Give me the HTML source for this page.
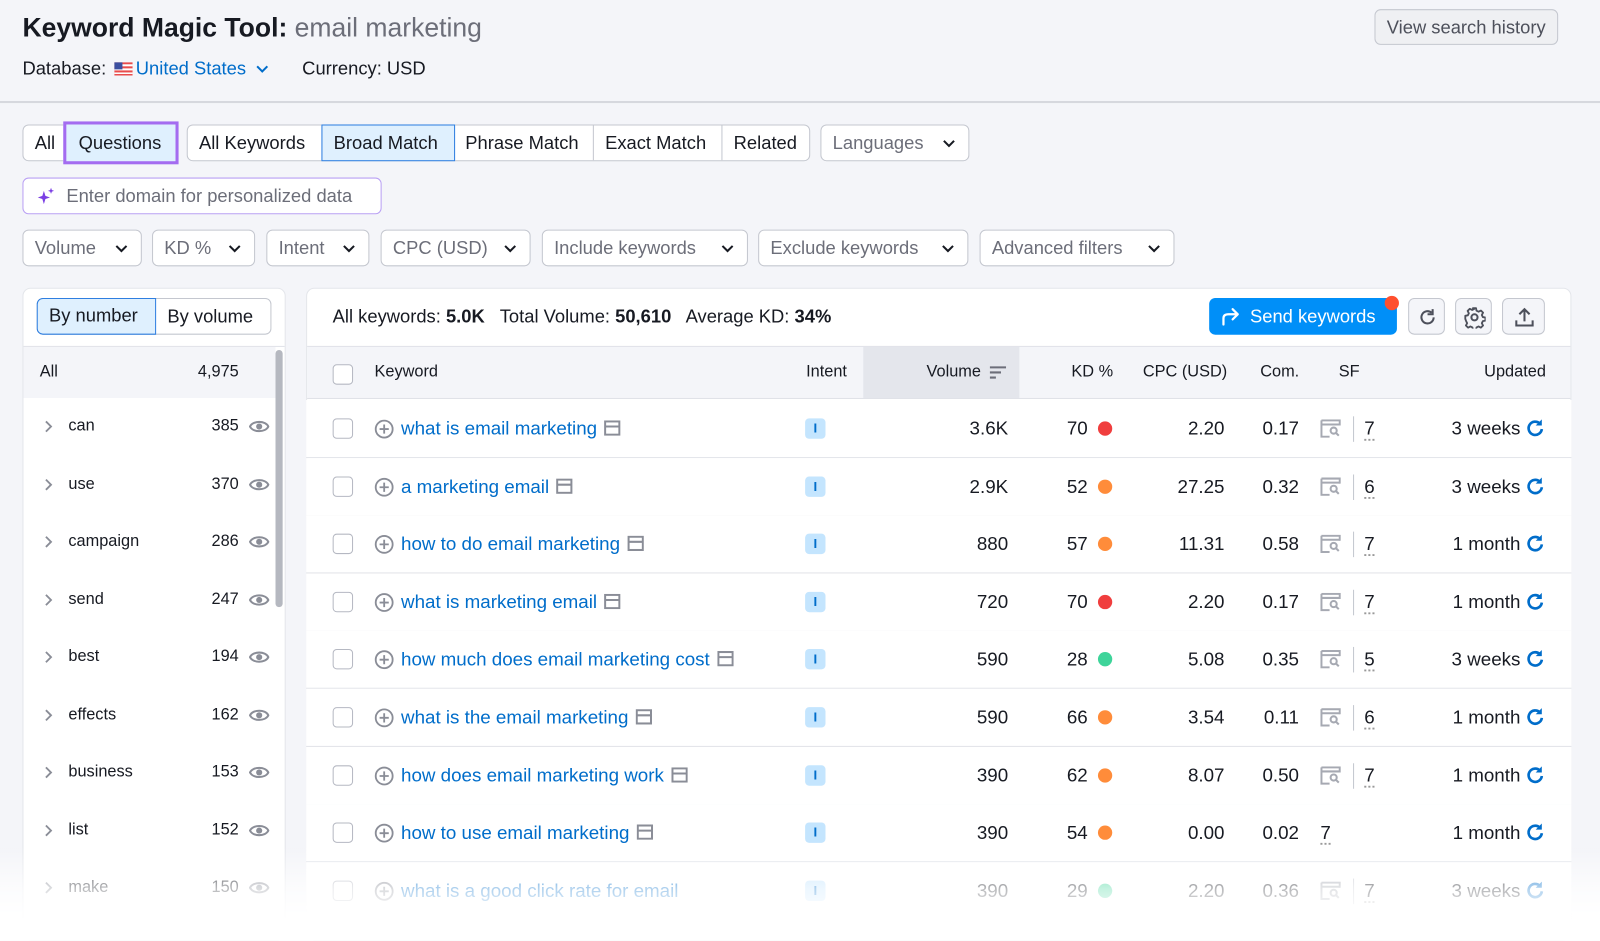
<!DOCTYPE html>
<html><head><meta charset="utf-8"><style>
*{box-sizing:border-box;margin:0;padding:0}
body{width:1600px;height:922px;overflow:hidden;background:#f4f5f9;font-family:"Liberation Sans",sans-serif;color:#171a22;position:relative}
#w{position:absolute;left:0;top:0;width:1600px;height:922px;transform:scale(1.0204);transform-origin:0 0}
.a{position:absolute;white-space:nowrap}
.btn{position:absolute;height:36px;border:1px solid #c4c7cf;border-radius:6px;background:#fff;font-size:18px;line-height:34px;padding:0 11px;color:#171a22}
.dd{color:#6c6e79}
.dd svg{position:absolute;right:12px;top:13px}
.seg{position:absolute;top:0;height:34px;line-height:34px;padding:0 11px;border-left:1px solid #c4c7cf}
.lrow{position:absolute;left:22px;width:248px;height:56px;font-size:16px;line-height:56px}
.lrow .w{position:absolute;left:45px}
.lrow .n{position:absolute;right:36px}
.lrow .c{position:absolute;left:21px;top:21px}
.lrow .e{position:absolute;right:6px;top:19px}
.row{position:absolute;left:300px;width:1240px;height:57px;background:#fff;border-bottom:1px solid #e0e2e8;font-size:18.4px;line-height:56px}
.row>*{position:absolute}
.cb{left:26px;top:18px;width:20px;height:20px;border:1.5px solid #b5b8c2;border-radius:4px;background:#fff}
.pl{left:67px;top:19px}
.kw{left:93px;color:#006dca}
.kw svg{margin-left:7px;vertical-align:-1px}
.it{left:489px;top:18px;width:20px;height:20px;background:#c4e5fe;border-radius:4px;color:#006dca;font-size:13px;line-height:20px;text-align:center;font-weight:bold}
.vol{right:552px}
.kd{right:474px}
.dot{left:776px;top:21px;width:14px;height:14px;border-radius:50%}
.cpc{right:340px}
.com{right:267px}
.sfi{left:994px;top:19px}
.sfd{left:1026px;top:16px;width:1px;height:25px;background:#c4c7cf}
.sfn{left:1037px;text-decoration:underline dotted #999;text-underline-offset:5px}
.up{right:50px}
.ri{left:1195px;top:18px}
.red{background:#f03e3e}.or{background:#ff8c3a}.gr{background:#3ed49a}
</style></head><body><div id="w">
<div class="a" style="left:22px;top:10px;font-size:26px;font-weight:bold;line-height:34px">Keyword Magic Tool: <span style="font-weight:normal;color:#6c6e79">email marketing</span></div>
<div class="a" style="left:22px;top:56px;font-size:18px;line-height:22px">Database: <svg width="18" height="13" style="vertical-align:-1px;margin:0 3px"><rect width="18" height="13" fill="#e84c4c"/><rect y="2" width="18" height="2" fill="#fff"/><rect y="6" width="18" height="2" fill="#fff"/><rect y="10" width="18" height="1.5" fill="#fff"/><rect width="8" height="7" fill="#3b4fa0"/></svg><span style="color:#006dca">United States</span> <svg width="14" height="10" style="margin-left:4px"><path d="M2 2l5 5 5-5" stroke="#006dca" stroke-width="2" fill="none"/></svg><span style="margin-left:32px">Currency: USD</span></div>
<div class="btn" style="left:1347px;top:9px;height:35px;background:#eff0f3;color:#4d505b;font-size:18px">View search history</div>
<div class="a" style="left:0;top:99px;width:1600px;height:2px;background:#d6d8de"></div>

<div class="btn" style="left:22px;top:122px;width:151px;padding:0">
 <span class="seg" style="left:0;border:0">All</span>
</div>
<div class="a" style="left:62px;top:119px;width:113px;height:42px;border:3px solid #a46cf0;background:#dff0fe;font-size:18px;line-height:36px;padding-left:12px">Questions</div>
<div class="btn" style="left:183px;top:122px;width:611px;padding:0">
 <span class="seg" style="left:0;border:0">All Keywords</span>
 <span class="seg" style="left:131px;top:-1px;height:36px;border:1.5px solid #2e7ee0;background:#dff0fe;width:131px">Broad Match</span>
 <span class="seg" style="left:261px;border-left:0">Phrase Match</span>
 <span class="seg" style="left:397px">Exact Match</span>
 <span class="seg" style="left:523px">Related</span>
</div>
<div class="btn dd" style="left:804px;top:122px;width:146px">Languages<svg width="14" height="10"><path d="M2 2l5 5 5-5" stroke="#171a22" stroke-width="2" fill="none"/></svg></div>
<div class="btn" style="left:22px;top:174px;width:352px;border-color:#b9a0f4;color:#6c6e79;padding-left:42px"><svg class="a" style="left:12px;top:8px" width="20" height="20" viewBox="0 0 20 20"><path d="M8 4 L9.5 9 L14 10.5 L9.5 12 L8 17 L6.5 12 L2 10.5 L6.5 9Z" fill="#7b3fe4"/><path d="M15 1 L15.8 3.2 L18 4 L15.8 4.8 L15 7 L14.2 4.8 L12 4 L14.2 3.2Z" fill="#7b3fe4"/></svg>Enter domain for personalized data</div>

<div class="btn dd" style="left:22px;top:225px;width:117px">Volume<svg width="14" height="10"><path d="M2 2l5 5 5-5" stroke="#171a22" stroke-width="2" fill="none"/></svg></div>
<div class="btn dd" style="left:149px;top:225px;width:101px">KD %<svg width="14" height="10"><path d="M2 2l5 5 5-5" stroke="#171a22" stroke-width="2" fill="none"/></svg></div>
<div class="btn dd" style="left:261px;top:225px;width:101px">Intent<svg width="14" height="10"><path d="M2 2l5 5 5-5" stroke="#171a22" stroke-width="2" fill="none"/></svg></div>
<div class="btn dd" style="left:373px;top:225px;width:147px">CPC (USD)<svg width="14" height="10"><path d="M2 2l5 5 5-5" stroke="#171a22" stroke-width="2" fill="none"/></svg></div>
<div class="btn dd" style="left:531px;top:225px;width:202px">Include keywords<svg width="14" height="10"><path d="M2 2l5 5 5-5" stroke="#171a22" stroke-width="2" fill="none"/></svg></div>
<div class="btn dd" style="left:743px;top:225px;width:206px">Exclude keywords<svg width="14" height="10"><path d="M2 2l5 5 5-5" stroke="#171a22" stroke-width="2" fill="none"/></svg></div>
<div class="btn dd" style="left:960px;top:225px;width:191px">Advanced filters<svg width="14" height="10"><path d="M2 2l5 5 5-5" stroke="#171a22" stroke-width="2" fill="none"/></svg></div>

<div class="a" style="left:22px;top:282px;width:258px;height:640px;background:#fff;border:1px solid #e4e6eb;border-radius:8px"></div>
<div class="a" style="left:36px;top:292px;width:230px;height:36px;border:1px solid #c4c7cf;border-radius:6px;background:#fff;font-size:18px;line-height:34px">
 <span class="a" style="left:-1px;top:-1px;width:117px;height:36px;border:1.5px solid #2e7ee0;border-radius:6px 0 0 6px;background:#dff0fe;padding-left:11px;line-height:33px">By number</span>
 <span class="a" style="left:127px">By volume</span>
</div>
<div class="a" style="left:23px;top:339px;width:256px;height:1px;background:#e0e2e8"></div>
<div class="lrow" style="top:340px;height:50px;background:#f4f5f9;line-height:50px;width:247px;left:23px"><span class="a" style="left:16px">All</span><span class="n" style="right:36px">4,975</span></div>
<div class="a" style="left:270px;top:343px;width:7px;height:252px;background:#b5b8c0;border-radius:4px"></div>

<div class="lrow" style="top:390px"><svg class="c" width="10" height="14"><path d="M2 2l5 5-5 5" stroke="#8a8d97" stroke-width="1.8" fill="none"/></svg><span class="w">can</span><span class="n">385</span><svg class="e" width="20" height="18" viewBox="0 0 20 18"><path d="M1 9C4 3 16 3 19 9C16 15 4 15 1 9Z" stroke="#8a8d97" stroke-width="2" fill="none"/><circle cx="10" cy="9" r="3" fill="#8a8d97"/></svg></div>
<div class="lrow" style="top:447px"><svg class="c" width="10" height="14"><path d="M2 2l5 5-5 5" stroke="#8a8d97" stroke-width="1.8" fill="none"/></svg><span class="w">use</span><span class="n">370</span><svg class="e" width="20" height="18" viewBox="0 0 20 18"><path d="M1 9C4 3 16 3 19 9C16 15 4 15 1 9Z" stroke="#8a8d97" stroke-width="2" fill="none"/><circle cx="10" cy="9" r="3" fill="#8a8d97"/></svg></div>
<div class="lrow" style="top:503px"><svg class="c" width="10" height="14"><path d="M2 2l5 5-5 5" stroke="#8a8d97" stroke-width="1.8" fill="none"/></svg><span class="w">campaign</span><span class="n">286</span><svg class="e" width="20" height="18" viewBox="0 0 20 18"><path d="M1 9C4 3 16 3 19 9C16 15 4 15 1 9Z" stroke="#8a8d97" stroke-width="2" fill="none"/><circle cx="10" cy="9" r="3" fill="#8a8d97"/></svg></div>
<div class="lrow" style="top:560px"><svg class="c" width="10" height="14"><path d="M2 2l5 5-5 5" stroke="#8a8d97" stroke-width="1.8" fill="none"/></svg><span class="w">send</span><span class="n">247</span><svg class="e" width="20" height="18" viewBox="0 0 20 18"><path d="M1 9C4 3 16 3 19 9C16 15 4 15 1 9Z" stroke="#8a8d97" stroke-width="2" fill="none"/><circle cx="10" cy="9" r="3" fill="#8a8d97"/></svg></div>
<div class="lrow" style="top:616px"><svg class="c" width="10" height="14"><path d="M2 2l5 5-5 5" stroke="#8a8d97" stroke-width="1.8" fill="none"/></svg><span class="w">best</span><span class="n">194</span><svg class="e" width="20" height="18" viewBox="0 0 20 18"><path d="M1 9C4 3 16 3 19 9C16 15 4 15 1 9Z" stroke="#8a8d97" stroke-width="2" fill="none"/><circle cx="10" cy="9" r="3" fill="#8a8d97"/></svg></div>
<div class="lrow" style="top:673px"><svg class="c" width="10" height="14"><path d="M2 2l5 5-5 5" stroke="#8a8d97" stroke-width="1.8" fill="none"/></svg><span class="w">effects</span><span class="n">162</span><svg class="e" width="20" height="18" viewBox="0 0 20 18"><path d="M1 9C4 3 16 3 19 9C16 15 4 15 1 9Z" stroke="#8a8d97" stroke-width="2" fill="none"/><circle cx="10" cy="9" r="3" fill="#8a8d97"/></svg></div>
<div class="lrow" style="top:729px"><svg class="c" width="10" height="14"><path d="M2 2l5 5-5 5" stroke="#8a8d97" stroke-width="1.8" fill="none"/></svg><span class="w">business</span><span class="n">153</span><svg class="e" width="20" height="18" viewBox="0 0 20 18"><path d="M1 9C4 3 16 3 19 9C16 15 4 15 1 9Z" stroke="#8a8d97" stroke-width="2" fill="none"/><circle cx="10" cy="9" r="3" fill="#8a8d97"/></svg></div>
<div class="lrow" style="top:786px"><svg class="c" width="10" height="14"><path d="M2 2l5 5-5 5" stroke="#8a8d97" stroke-width="1.8" fill="none"/></svg><span class="w">list</span><span class="n">152</span><svg class="e" width="20" height="18" viewBox="0 0 20 18"><path d="M1 9C4 3 16 3 19 9C16 15 4 15 1 9Z" stroke="#8a8d97" stroke-width="2" fill="none"/><circle cx="10" cy="9" r="3" fill="#8a8d97"/></svg></div>
<div class="lrow" style="top:842px"><svg class="c" width="10" height="14"><path d="M2 2l5 5-5 5" stroke="#8a8d97" stroke-width="1.8" fill="none"/></svg><span class="w">make</span><span class="n">150</span><svg class="e" width="20" height="18" viewBox="0 0 20 18"><path d="M1 9C4 3 16 3 19 9C16 15 4 15 1 9Z" stroke="#8a8d97" stroke-width="2" fill="none"/><circle cx="10" cy="9" r="3" fill="#8a8d97"/></svg></div>

<div class="a" style="left:300px;top:282px;width:1240px;height:640px;background:#fff;border:1px solid #e4e6eb;border-radius:8px"></div>
<div class="a" style="left:326px;top:298px;font-size:18px;line-height:24px">All keywords: <b>5.0K</b>&nbsp;&nbsp; Total Volume: <b>50,610</b>&nbsp;&nbsp; Average KD: <b>34%</b></div>
<div class="a" style="left:1185px;top:292px;width:184px;height:36px;background:#008ff8;border-radius:6px;color:#fff;font-size:18px;line-height:36px;padding-left:40px">Send keywords<svg class="a" style="left:11px;top:8px" width="20" height="20" viewBox="0 0 20 20"><path d="M3 18V12Q3 8 8 8H17M12 3l5 5-5 5" stroke="#fff" stroke-width="2.2" fill="none" stroke-linecap="round" stroke-linejoin="round"/></svg></div>
<div class="a" style="left:1357px;top:290px;width:14px;height:14px;border-radius:50%;background:#ff4f2e"></div>
<div class="a" style="left:1380px;top:292px;width:36px;height:36px;border:1px solid #c4c7cf;border-radius:6px;background:#f4f5f9"><svg class="a" style="left:8px;top:8px" width="20" height="20" viewBox="0 0 20 20"><path d="M16 10A6 6 0 1 1 14 5.5" stroke="#4d505b" stroke-width="2" fill="none"/><path d="M15 2v5h-5" stroke="#4d505b" stroke-width="2" fill="none"/></svg></div>
<div class="a" style="left:1426px;top:292px;width:36px;height:36px;border:1px solid #c4c7cf;border-radius:6px;background:#f4f5f9"><svg class="a" style="left:7px;top:7px" width="22" height="22" viewBox="0 0 22 22"><circle cx="11" cy="11" r="3" stroke="#4d505b" stroke-width="2" fill="none"/><path d="M9.5 2h3l.5 2.5 2 1 2.3-1.2 2.1 2.1-1.2 2.3 1 2 2.5.5v3l-2.5.5-1 2 1.2 2.3-2.1 2.1-2.3-1.2-2 1-.5 2.5h-3l-.5-2.5-2-1-2.3 1.2-2.1-2.1 1.2-2.3-1-2L2 12.5v-3l2.5-.5 1-2-1.2-2.3 2.1-2.1 2.3 1.2 2-1z" stroke="#4d505b" stroke-width="1.8" fill="none" stroke-linejoin="round"/></svg></div>
<div class="a" style="left:1472px;top:292px;width:42px;height:36px;border:1px solid #c4c7cf;border-radius:6px;background:#f4f5f9"><svg class="a" style="left:10px;top:7px" width="22" height="22" viewBox="0 0 22 22"><path d="M11 15V3M6 8l5-5 5 5M3 14v5h16v-5" stroke="#4d505b" stroke-width="2" fill="none"/></svg></div>

<div class="a" style="left:301px;top:339px;width:1238px;height:52px;background:#f4f5f9;border-top:1px solid #e0e2e8;border-bottom:1px solid #e0e2e8;font-size:16px;line-height:50px">
 <span class="a" style="left:25px;top:17px;width:20px;height:20px;border:1.5px solid #b5b8c2;border-radius:4px;background:#fff"></span>
 <span class="a" style="left:66px">Keyword</span>
 <span class="a" style="left:489px">Intent</span>
 <span class="a" style="left:545px;width:153px;height:50px;background:#e4e6ec"></span>
 <span class="a" style="left:607px">Volume</span>
 <svg class="a" style="left:669px;top:18px" width="16" height="14"><path d="M0 2h16M0 7h11M0 12h6" stroke="#6c6e79" stroke-width="2"/></svg>
 <span class="a" style="left:749px">KD %</span>
 <span class="a" style="left:819px">CPC (USD)</span>
 <span class="a" style="left:934px">Com.</span>
 <span class="a" style="left:1011px">SF</span>
 <span class="a" style="right:24px">Updated</span>
</div>

<div class="row" style="top:392px"><span class="cb"></span><svg class="pl" width="19" height="19" viewBox="0 0 19 19"><circle cx="9.5" cy="9.5" r="8.3" stroke="#8a8d97" stroke-width="1.8" fill="none"/><path d="M9.5 5v9M5 9.5h9" stroke="#8a8d97" stroke-width="1.8"/></svg><span class="kw">what is email marketing<svg width="16" height="15"><rect x="1" y="1" width="14" height="13" stroke="#8a8d97" stroke-width="2" fill="none"/><path d="M1 6h14" stroke="#8a8d97" stroke-width="2"/></svg></span><span class="it">I</span><span class="vol">3.6K</span><span class="kd">70</span><span class="dot red"></span><span class="cpc">2.20</span><span class="com">0.17</span><svg class="sfi" width="20" height="18" viewBox="0 0 20 18"><path d="M1 1h18v5M1 1v16h8" stroke="#a6a9b2" stroke-width="2" fill="none"/><path d="M1 5h18" stroke="#a6a9b2" stroke-width="2"/><circle cx="13" cy="11" r="3" stroke="#a6a9b2" stroke-width="2" fill="none"/><path d="M15 13l3 3" stroke="#a6a9b2" stroke-width="2"/></svg><span class="sfd"></span><span class="sfn">7</span><span class="up">3 weeks</span><svg class="ri" width="20" height="20" viewBox="0 0 20 20"><path d="M16 10.5A6.5 6.5 0 1 1 14 5" stroke="#006dca" stroke-width="2.6" fill="none"/><path d="M16 1v6h-6" fill="#006dca"/></svg></div>
<div class="row" style="top:449px"><span class="cb"></span><svg class="pl" width="19" height="19" viewBox="0 0 19 19"><circle cx="9.5" cy="9.5" r="8.3" stroke="#8a8d97" stroke-width="1.8" fill="none"/><path d="M9.5 5v9M5 9.5h9" stroke="#8a8d97" stroke-width="1.8"/></svg><span class="kw">a marketing email<svg width="16" height="15"><rect x="1" y="1" width="14" height="13" stroke="#8a8d97" stroke-width="2" fill="none"/><path d="M1 6h14" stroke="#8a8d97" stroke-width="2"/></svg></span><span class="it">I</span><span class="vol">2.9K</span><span class="kd">52</span><span class="dot or"></span><span class="cpc">27.25</span><span class="com">0.32</span><svg class="sfi" width="20" height="18" viewBox="0 0 20 18"><path d="M1 1h18v5M1 1v16h8" stroke="#a6a9b2" stroke-width="2" fill="none"/><path d="M1 5h18" stroke="#a6a9b2" stroke-width="2"/><circle cx="13" cy="11" r="3" stroke="#a6a9b2" stroke-width="2" fill="none"/><path d="M15 13l3 3" stroke="#a6a9b2" stroke-width="2"/></svg><span class="sfd"></span><span class="sfn">6</span><span class="up">3 weeks</span><svg class="ri" width="20" height="20" viewBox="0 0 20 20"><path d="M16 10.5A6.5 6.5 0 1 1 14 5" stroke="#006dca" stroke-width="2.6" fill="none"/><path d="M16 1v6h-6" fill="#006dca"/></svg></div>
<div class="row" style="top:505px"><span class="cb"></span><svg class="pl" width="19" height="19" viewBox="0 0 19 19"><circle cx="9.5" cy="9.5" r="8.3" stroke="#8a8d97" stroke-width="1.8" fill="none"/><path d="M9.5 5v9M5 9.5h9" stroke="#8a8d97" stroke-width="1.8"/></svg><span class="kw">how to do email marketing<svg width="16" height="15"><rect x="1" y="1" width="14" height="13" stroke="#8a8d97" stroke-width="2" fill="none"/><path d="M1 6h14" stroke="#8a8d97" stroke-width="2"/></svg></span><span class="it">I</span><span class="vol">880</span><span class="kd">57</span><span class="dot or"></span><span class="cpc">11.31</span><span class="com">0.58</span><svg class="sfi" width="20" height="18" viewBox="0 0 20 18"><path d="M1 1h18v5M1 1v16h8" stroke="#a6a9b2" stroke-width="2" fill="none"/><path d="M1 5h18" stroke="#a6a9b2" stroke-width="2"/><circle cx="13" cy="11" r="3" stroke="#a6a9b2" stroke-width="2" fill="none"/><path d="M15 13l3 3" stroke="#a6a9b2" stroke-width="2"/></svg><span class="sfd"></span><span class="sfn">7</span><span class="up">1 month</span><svg class="ri" width="20" height="20" viewBox="0 0 20 20"><path d="M16 10.5A6.5 6.5 0 1 1 14 5" stroke="#006dca" stroke-width="2.6" fill="none"/><path d="M16 1v6h-6" fill="#006dca"/></svg></div>
<div class="row" style="top:562px"><span class="cb"></span><svg class="pl" width="19" height="19" viewBox="0 0 19 19"><circle cx="9.5" cy="9.5" r="8.3" stroke="#8a8d97" stroke-width="1.8" fill="none"/><path d="M9.5 5v9M5 9.5h9" stroke="#8a8d97" stroke-width="1.8"/></svg><span class="kw">what is marketing email<svg width="16" height="15"><rect x="1" y="1" width="14" height="13" stroke="#8a8d97" stroke-width="2" fill="none"/><path d="M1 6h14" stroke="#8a8d97" stroke-width="2"/></svg></span><span class="it">I</span><span class="vol">720</span><span class="kd">70</span><span class="dot red"></span><span class="cpc">2.20</span><span class="com">0.17</span><svg class="sfi" width="20" height="18" viewBox="0 0 20 18"><path d="M1 1h18v5M1 1v16h8" stroke="#a6a9b2" stroke-width="2" fill="none"/><path d="M1 5h18" stroke="#a6a9b2" stroke-width="2"/><circle cx="13" cy="11" r="3" stroke="#a6a9b2" stroke-width="2" fill="none"/><path d="M15 13l3 3" stroke="#a6a9b2" stroke-width="2"/></svg><span class="sfd"></span><span class="sfn">7</span><span class="up">1 month</span><svg class="ri" width="20" height="20" viewBox="0 0 20 20"><path d="M16 10.5A6.5 6.5 0 1 1 14 5" stroke="#006dca" stroke-width="2.6" fill="none"/><path d="M16 1v6h-6" fill="#006dca"/></svg></div>
<div class="row" style="top:618px"><span class="cb"></span><svg class="pl" width="19" height="19" viewBox="0 0 19 19"><circle cx="9.5" cy="9.5" r="8.3" stroke="#8a8d97" stroke-width="1.8" fill="none"/><path d="M9.5 5v9M5 9.5h9" stroke="#8a8d97" stroke-width="1.8"/></svg><span class="kw">how much does email marketing cost<svg width="16" height="15"><rect x="1" y="1" width="14" height="13" stroke="#8a8d97" stroke-width="2" fill="none"/><path d="M1 6h14" stroke="#8a8d97" stroke-width="2"/></svg></span><span class="it">I</span><span class="vol">590</span><span class="kd">28</span><span class="dot gr"></span><span class="cpc">5.08</span><span class="com">0.35</span><svg class="sfi" width="20" height="18" viewBox="0 0 20 18"><path d="M1 1h18v5M1 1v16h8" stroke="#a6a9b2" stroke-width="2" fill="none"/><path d="M1 5h18" stroke="#a6a9b2" stroke-width="2"/><circle cx="13" cy="11" r="3" stroke="#a6a9b2" stroke-width="2" fill="none"/><path d="M15 13l3 3" stroke="#a6a9b2" stroke-width="2"/></svg><span class="sfd"></span><span class="sfn">5</span><span class="up">3 weeks</span><svg class="ri" width="20" height="20" viewBox="0 0 20 20"><path d="M16 10.5A6.5 6.5 0 1 1 14 5" stroke="#006dca" stroke-width="2.6" fill="none"/><path d="M16 1v6h-6" fill="#006dca"/></svg></div>
<div class="row" style="top:675px"><span class="cb"></span><svg class="pl" width="19" height="19" viewBox="0 0 19 19"><circle cx="9.5" cy="9.5" r="8.3" stroke="#8a8d97" stroke-width="1.8" fill="none"/><path d="M9.5 5v9M5 9.5h9" stroke="#8a8d97" stroke-width="1.8"/></svg><span class="kw">what is the email marketing<svg width="16" height="15"><rect x="1" y="1" width="14" height="13" stroke="#8a8d97" stroke-width="2" fill="none"/><path d="M1 6h14" stroke="#8a8d97" stroke-width="2"/></svg></span><span class="it">I</span><span class="vol">590</span><span class="kd">66</span><span class="dot or"></span><span class="cpc">3.54</span><span class="com">0.11</span><svg class="sfi" width="20" height="18" viewBox="0 0 20 18"><path d="M1 1h18v5M1 1v16h8" stroke="#a6a9b2" stroke-width="2" fill="none"/><path d="M1 5h18" stroke="#a6a9b2" stroke-width="2"/><circle cx="13" cy="11" r="3" stroke="#a6a9b2" stroke-width="2" fill="none"/><path d="M15 13l3 3" stroke="#a6a9b2" stroke-width="2"/></svg><span class="sfd"></span><span class="sfn">6</span><span class="up">1 month</span><svg class="ri" width="20" height="20" viewBox="0 0 20 20"><path d="M16 10.5A6.5 6.5 0 1 1 14 5" stroke="#006dca" stroke-width="2.6" fill="none"/><path d="M16 1v6h-6" fill="#006dca"/></svg></div>
<div class="row" style="top:732px"><span class="cb"></span><svg class="pl" width="19" height="19" viewBox="0 0 19 19"><circle cx="9.5" cy="9.5" r="8.3" stroke="#8a8d97" stroke-width="1.8" fill="none"/><path d="M9.5 5v9M5 9.5h9" stroke="#8a8d97" stroke-width="1.8"/></svg><span class="kw">how does email marketing work<svg width="16" height="15"><rect x="1" y="1" width="14" height="13" stroke="#8a8d97" stroke-width="2" fill="none"/><path d="M1 6h14" stroke="#8a8d97" stroke-width="2"/></svg></span><span class="it">I</span><span class="vol">390</span><span class="kd">62</span><span class="dot or"></span><span class="cpc">8.07</span><span class="com">0.50</span><svg class="sfi" width="20" height="18" viewBox="0 0 20 18"><path d="M1 1h18v5M1 1v16h8" stroke="#a6a9b2" stroke-width="2" fill="none"/><path d="M1 5h18" stroke="#a6a9b2" stroke-width="2"/><circle cx="13" cy="11" r="3" stroke="#a6a9b2" stroke-width="2" fill="none"/><path d="M15 13l3 3" stroke="#a6a9b2" stroke-width="2"/></svg><span class="sfd"></span><span class="sfn">7</span><span class="up">1 month</span><svg class="ri" width="20" height="20" viewBox="0 0 20 20"><path d="M16 10.5A6.5 6.5 0 1 1 14 5" stroke="#006dca" stroke-width="2.6" fill="none"/><path d="M16 1v6h-6" fill="#006dca"/></svg></div>
<div class="row" style="top:788px"><span class="cb"></span><svg class="pl" width="19" height="19" viewBox="0 0 19 19"><circle cx="9.5" cy="9.5" r="8.3" stroke="#8a8d97" stroke-width="1.8" fill="none"/><path d="M9.5 5v9M5 9.5h9" stroke="#8a8d97" stroke-width="1.8"/></svg><span class="kw">how to use email marketing<svg width="16" height="15"><rect x="1" y="1" width="14" height="13" stroke="#8a8d97" stroke-width="2" fill="none"/><path d="M1 6h14" stroke="#8a8d97" stroke-width="2"/></svg></span><span class="it">I</span><span class="vol">390</span><span class="kd">54</span><span class="dot or"></span><span class="cpc">0.00</span><span class="com">0.02</span><span class="sfn" style="left:994px">7</span><span class="up">1 month</span><svg class="ri" width="20" height="20" viewBox="0 0 20 20"><path d="M16 10.5A6.5 6.5 0 1 1 14 5" stroke="#006dca" stroke-width="2.6" fill="none"/><path d="M16 1v6h-6" fill="#006dca"/></svg></div>
<div class="row" style="top:845px"><span class="cb"></span><svg class="pl" width="19" height="19" viewBox="0 0 19 19"><circle cx="9.5" cy="9.5" r="8.3" stroke="#8a8d97" stroke-width="1.8" fill="none"/><path d="M9.5 5v9M5 9.5h9" stroke="#8a8d97" stroke-width="1.8"/></svg><span class="kw">what is a good click rate for email</span><span class="it">I</span><span class="vol">390</span><span class="kd">29</span><span class="dot gr"></span><span class="cpc">2.20</span><span class="com">0.36</span><svg class="sfi" width="20" height="18" viewBox="0 0 20 18"><path d="M1 1h18v5M1 1v16h8" stroke="#a6a9b2" stroke-width="2" fill="none"/><path d="M1 5h18" stroke="#a6a9b2" stroke-width="2"/><circle cx="13" cy="11" r="3" stroke="#a6a9b2" stroke-width="2" fill="none"/><path d="M15 13l3 3" stroke="#a6a9b2" stroke-width="2"/></svg><span class="sfd"></span><span class="sfn">7</span><span class="up">3 weeks</span><svg class="ri" width="20" height="20" viewBox="0 0 20 20"><path d="M16 10.5A6.5 6.5 0 1 1 14 5" stroke="#006dca" stroke-width="2.6" fill="none"/><path d="M16 1v6h-6" fill="#006dca"/></svg></div>

<div class="a" style="left:0;top:830px;width:1600px;height:92px;background:linear-gradient(to bottom,rgba(255,255,255,0) 0%,rgba(255,255,255,0.7) 45%,#fff 78%,#fff 100%)"></div>
</div></body></html>
